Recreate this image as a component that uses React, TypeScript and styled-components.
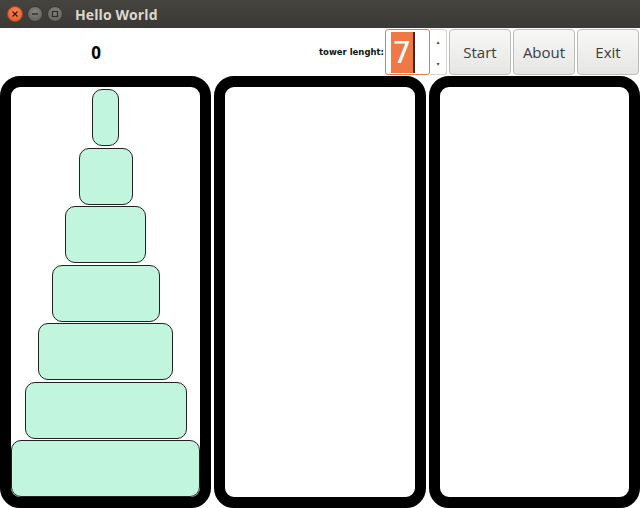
import React from "react";
import styled, { createGlobalStyle } from "styled-components";

const Global = createGlobalStyle`
  html, body { margin: 0; padding: 0; background: #ffffff; }
  body { font-family: "Open Sans", "DejaVu Sans", sans-serif; }
`;

const Window = styled.div`
  width: 640px;
  height: 508px;
  display: flex;
  flex-direction: column;
  overflow: hidden;
  background: #ffffff;
`;

const TitleBar = styled.div`
  height: 28px;
  flex: 0 0 28px;
  display: flex;
  align-items: center;
  padding-left: 7px;
  gap: 4px;
  background: linear-gradient(#45443f, #3a3935);
  box-sizing: border-box;
`;

const WinButton = styled.div<{ $close?: boolean }>`
  width: 16px;
  height: 16px;
  border-radius: 50%;
  box-sizing: border-box;
  display: flex;
  align-items: center;
  justify-content: center;
  background: ${(p) =>
    p.$close
      ? "radial-gradient(circle at 50% 35%, #f58a5c, #e4531f)"
      : "radial-gradient(circle at 50% 35%, #85847f, #5b5a55)"};
  border: 1px solid ${(p) => (p.$close ? "#b8431b" : "#3a3935")};
`;

const Title = styled.div`
  margin-left: 8px;
  color: #dcd8cf;
  font-family: "Open Sans", "DejaVu Sans", sans-serif;
  font-weight: 700;
  font-size: 14px;
  letter-spacing: 0.1px;
`;

const Toolbar = styled.div`
  height: 48px;
  flex: 0 0 48px;
  display: flex;
  align-items: center;
  padding: 1px 1px 1px 0;
  box-sizing: border-box;
  gap: 2px;
`;

const Score = styled.div`
  width: 192px;
  text-align: center;
  font-family: "Open Sans", "DejaVu Sans", sans-serif;
  font-weight: 700;
  font-size: 17px;
  color: #000;
`;

const Spacer = styled.div`
  flex: 1;
`;

const Label = styled.div`
  font-family: "DejaVu Sans", sans-serif;
  font-weight: 700;
  font-size: 8.5px;
  color: #111;
  margin-right: -1px;
`;

const SpinBox = styled.div`
  display: flex;
  height: 46px;
  width: 62px;
`;

const SpinField = styled.div`
  width: 45px;
  box-sizing: border-box;
  border: 1px solid #f07746;
  border-radius: 3px;
  background: #fff;
  display: flex;
  align-items: center;
  padding-left: 5px;
`;

const Selected = styled.span`
  background: #f07746;
  color: #fff;
  font-family: "DejaVu Sans", sans-serif;
  font-size: 31px;
  line-height: 41px;
  height: 41px;
  padding: 0 1px;
  border-right: 2px solid #3a2a20;
`;

const SpinArrows = styled.div`
  flex: 1;
  box-sizing: border-box;
  border: 1px solid #d4d4d2;
  border-left: none;
  border-radius: 0 3px 3px 0;
  background: #fff;
  display: flex;
  flex-direction: column;
  justify-content: space-between;
  align-items: center;
  padding: 9px 0 7px;
  font-size: 6px;
  color: #555;
  line-height: 6px;
`;

const Button = styled.button`
  width: 62px;
  height: 46px;
  box-sizing: border-box;
  border: 1px solid #bdbdbb;
  border-radius: 4px;
  background: linear-gradient(#f8f8f7, #e6e6e4);
  font-family: "Open Sans", "DejaVu Sans", sans-serif;
  font-size: 15px;
  color: #3c3c3c;
  padding: 0;
  cursor: default;
`;

const Towers = styled.div`
  flex: 1;
  display: flex;
  gap: 3px;
`;

const Tower = styled.div`
  flex: 1;
  border: 11px solid #000;
  border-radius: 20px;
  background: #fff;
  display: flex;
  flex-direction: column;
  justify-content: flex-end;
  align-items: center;
  gap: 1.5px;
`;

const Disk = styled.div<{ $size: number }>`
  width: ${(p) => (p.$size / 7) * 100}%;
  height: 57px;
  flex: 0 0 57px;
  box-sizing: border-box;
  background: #c1f5de;
  border: 1px solid #222;
  border-radius: 10px;
`;

export default function App() {
  const disks = [1, 2, 3, 4, 5, 6, 7];
  return (
    <Window>
      <Global />
      <TitleBar>
        <WinButton $close>
          <svg width="8" height="8" viewBox="0 0 8 8">
            <path d="M1.5 1.5 L6.5 6.5 M6.5 1.5 L1.5 6.5" stroke="#3b1a0c" strokeWidth="1.3" />
          </svg>
        </WinButton>
        <WinButton>
          <svg width="8" height="8" viewBox="0 0 8 8">
            <path d="M1 4 H7" stroke="#2e2d2a" strokeWidth="1.4" />
          </svg>
        </WinButton>
        <WinButton>
          <svg width="8" height="8" viewBox="0 0 8 8">
            <rect x="1.5" y="1.5" width="5" height="5" fill="none" stroke="#2e2d2a" strokeWidth="1.2" />
          </svg>
        </WinButton>
        <Title>Hello World</Title>
      </TitleBar>
      <Toolbar>
        <Score>0</Score>
        <Spacer />
        <Label>tower lenght:</Label>
        <SpinBox>
          <SpinField>
            <Selected>7</Selected>
          </SpinField>
          <SpinArrows>
            <span>▴</span>
            <span>▾</span>
          </SpinArrows>
        </SpinBox>
        <Button>Start</Button>
        <Button>About</Button>
        <Button>Exit</Button>
      </Toolbar>
      <Towers>
        <Tower>
          {disks.map((d) => (
            <Disk key={d} $size={d} />
          ))}
        </Tower>
        <Tower />
        <Tower />
      </Towers>
    </Window>
  );
}
